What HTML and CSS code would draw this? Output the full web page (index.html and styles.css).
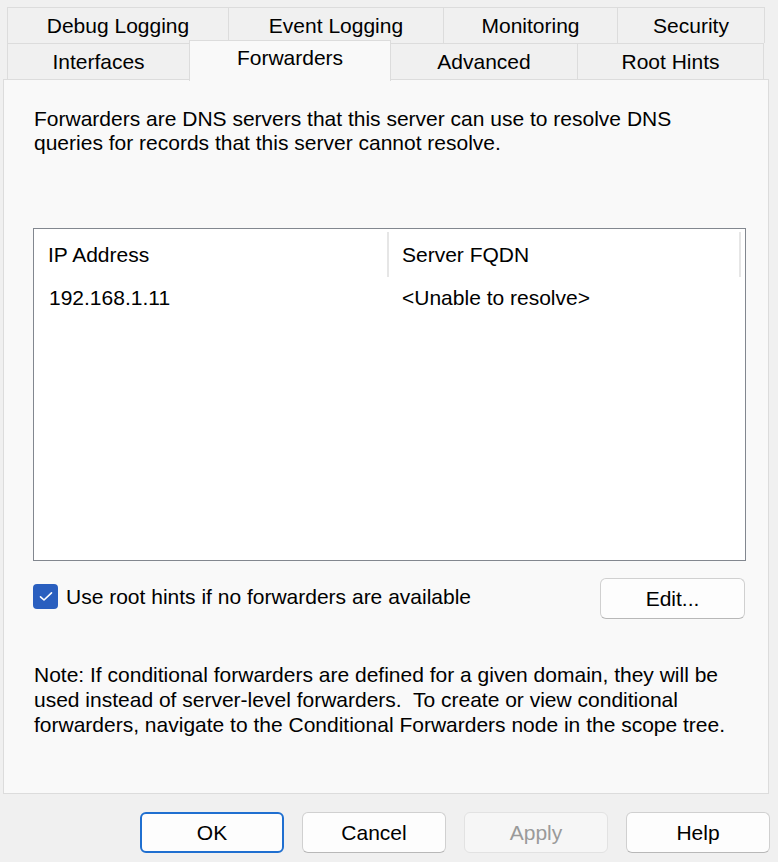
FILE: index.html
```html
<!DOCTYPE html>
<html>
<head>
<meta charset="utf-8">
<link rel="stylesheet" href="styles.css">
</head>
<body>
<div class="dialog">
  <div class="tabs">
    <div class="tabrow">
      <div class="tab w-debug">Debug Logging</div>
      <div class="tab w-event">Event Logging</div>
      <div class="tab w-mon">Monitoring</div>
      <div class="tab w-sec">Security</div>
    </div>
    <div class="tabrow">
      <div class="tab w-int">Interfaces</div>
      <div class="tab w-fwd selected">Forwarders</div>
      <div class="tab w-adv">Advanced</div>
      <div class="tab w-root">Root Hints</div>
    </div>
  </div>
  <div class="panel">
    <p class="desc">Forwarders are DNS servers that this server can use to resolve DNS<br>queries for records that this server cannot resolve.</p>
    <div class="list">
      <div class="list-head">
        <div class="col col-ip">IP Address</div>
        <div class="col col-fqdn">Server FQDN</div>
        <div class="col col-rest"></div>
      </div>
      <div class="list-row">
        <div class="cell col-ip">192.168.1.11</div>
        <div class="cell col-fqdn">&lt;Unable to resolve&gt;</div>
      </div>
    </div>
    <div class="opts">
      <label class="check">
        <span class="box"><svg width="14" height="11" viewBox="0 0 14 11"><path d="M1.5 5.8 L5 9 L12.5 1.8" fill="none" stroke="#ffffff" stroke-width="1.6" stroke-linecap="round" stroke-linejoin="round"/></svg></span>
        <span>Use root hints if no forwarders are available</span>
      </label>
      <button class="btn edit">Edit...</button>
    </div>
    <p class="note">Note: If conditional forwarders are defined for a given domain, they will be<br>used instead of server-level forwarders.&nbsp; To create or view conditional<br>forwarders, navigate to the Conditional Forwarders node in the scope tree.</p>
  </div>
  <div class="buttons">
    <button class="btn default">OK</button>
    <button class="btn">Cancel</button>
    <button class="btn disabled">Apply</button>
    <button class="btn">Help</button>
  </div>
</div>
</body>
</html>
```
FILE: styles.css
```css
html, body {
  margin: 0;
  padding: 0;
  background: #f0f0f0;
}
body {
  font-family: "Liberation Sans", Arial, sans-serif;
  font-size: 21px;
  color: #000;
  width: 778px;
  height: 862px;
  overflow: hidden;
}
.dialog {
  padding: 7px 0 0 3px;
}
.tabs {
  margin-left: 4px;
  width: 757px;
  position: relative;
  z-index: 1;
}
.tabrow {
  display: flex;
  height: 36px;
}
.tab {
  box-sizing: border-box;
  border: 1px solid #dcdcdc;
  border-bottom: none;
  background: #f0f0f0;
  display: flex;
  align-items: center;
  justify-content: center;
  padding-top: 1px;
  margin-right: -1px;
  line-height: 24px;
}
.w-debug { width: 222px; }
.w-event { width: 216px; }
.w-mon { width: 175px; }
.w-sec { width: 148px; }
.w-int { width: 183px; }
.w-fwd { width: 202px; }
.w-adv { width: 188px; }
.w-root { width: 187px; }
.tab.selected {
  background: #f9f9f9;
  margin-top: -3px;
  height: 41px;
  padding-top: 0;
  padding-bottom: 7px;
  position: relative;
  z-index: 2;
}
.panel {
  box-sizing: border-box;
  width: 766px;
  height: 715px;
  margin-top: 0;
  border: 1px solid #dcdcdc;
  background: #f9f9f9;
  padding: 0 0 0 29px;
  display: flex;
  flex-direction: column;
}
.desc {
  margin: 27px 0 0 1px;
  line-height: 24px;
}
.list {
  box-sizing: border-box;
  margin-top: 73px;
  width: 713px;
  height: 333px;
  border: 1px solid #82878f;
  background: #ffffff;
}
.list-head {
  display: flex;
  height: 50px;
  padding-top: 3px;
  box-sizing: border-box;
}
.col {
  box-sizing: border-box;
  display: flex;
  align-items: center;
  padding-left: 14px;
  height: 45px;
}
.col-ip { width: 353px; }
.col-fqdn { width: 352px; padding-left: 13px; }
.col-fqdn.col, .col-rest.col { border-left: 2px solid #e6e6e6; }
.col-rest { width: 4px; padding: 0; }
.list-row {
  display: flex;
  height: 38px;
  align-items: center;
}
.cell.col-ip { padding-left: 15px; box-sizing: border-box; }
.cell.col-fqdn { padding-left: 15px; box-sizing: border-box; }
.opts {
  display: flex;
  align-items: center;
  justify-content: space-between;
  width: 712px;
  margin-top: 17px;
}
.check {
  display: flex;
  align-items: center;
  gap: 8px;
  margin-left: 0;
  margin-top: -4px;
}
.box {
  width: 25px;
  height: 25px;
  border-radius: 4px;
  background: #2a5fbf;
  display: flex;
  align-items: center;
  justify-content: center;
}
.btn {
  font-family: "Liberation Sans", Arial, sans-serif;
  font-size: 21px;
  color: #000;
  box-sizing: border-box;
  width: 144px;
  height: 41px;
  border: 1px solid #d0d0d0;
  border-bottom-color: #b8b8b8;
  border-radius: 6px;
  background: #fdfdfd;
  padding: 0;
}
.btn.edit {
  width: 145px;
}
.note {
  margin: 43px 0 0 1px;
  line-height: 25px;
}
.buttons {
  display: flex;
  gap: 18px;
  padding-left: 137px;
  margin-top: 18px;
}
.btn.default {
  border: 2px solid #1f6fd0;
}
.btn.disabled {
  color: #9a9a9a;
  background: #f6f6f6;
  border-color: #e2e2e2;
}
```
